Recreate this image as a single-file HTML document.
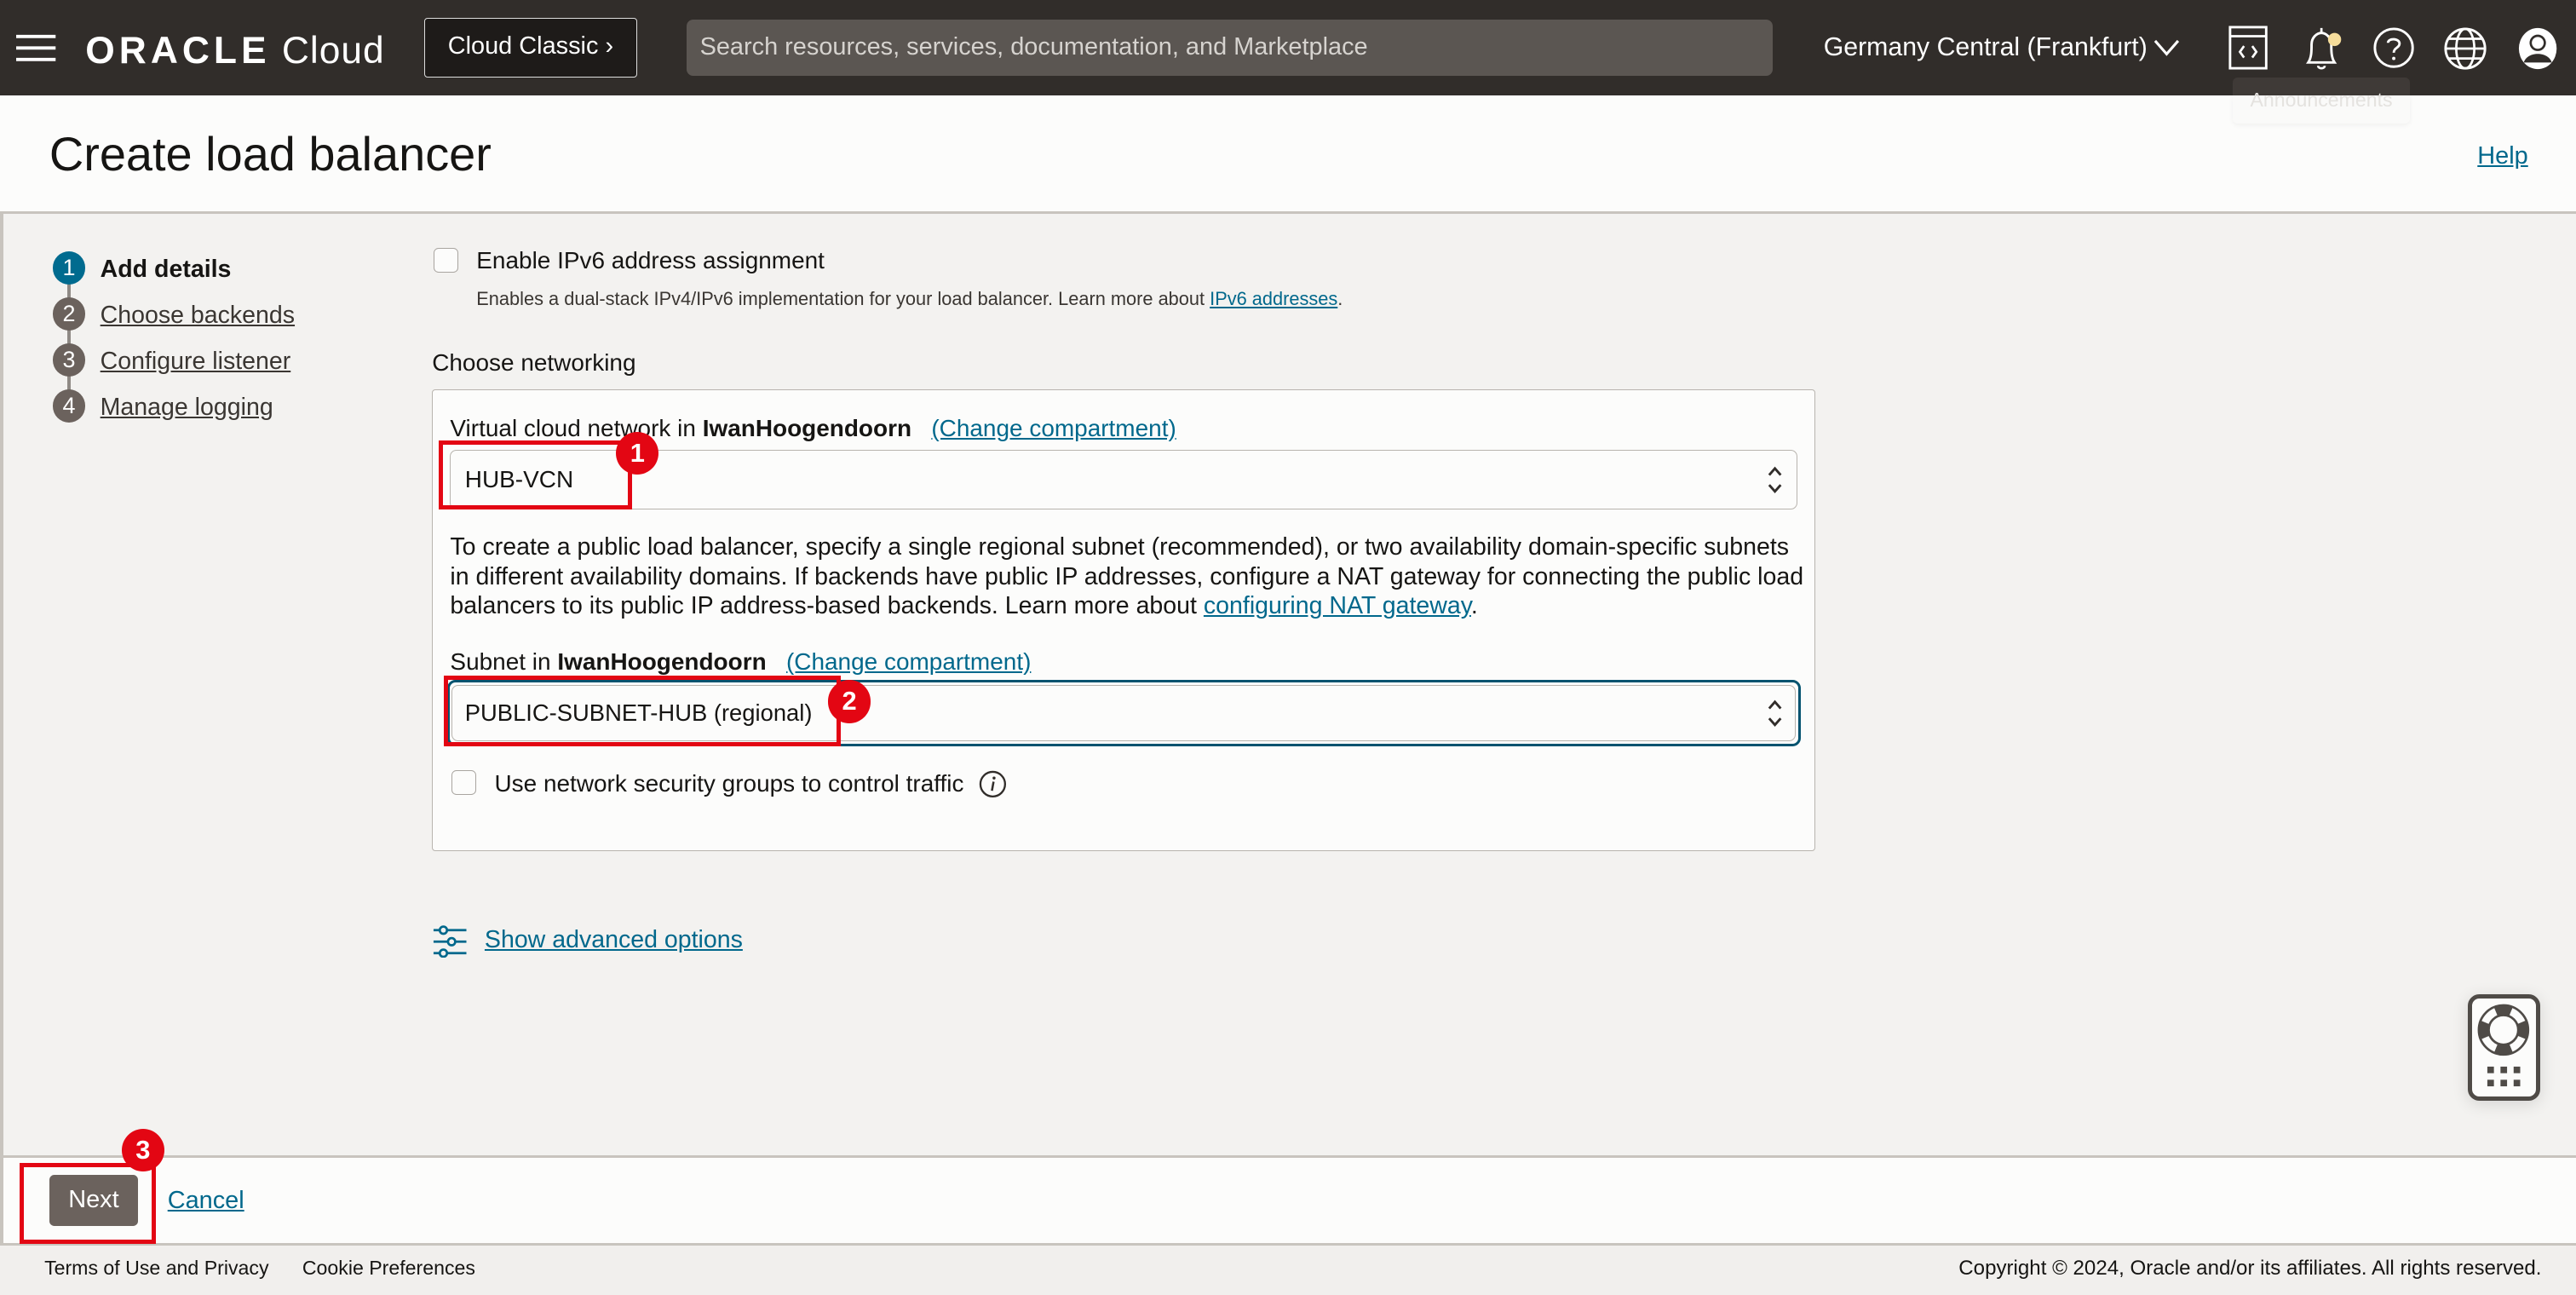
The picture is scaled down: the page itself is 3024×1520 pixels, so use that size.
<!DOCTYPE html>
<html><head><meta charset="utf-8"><style>
html,body{margin:0;padding:0;}
body{width:1568px;height:788px;zoom:1.928571;overflow:hidden;background:#f3f2f0;font-family:"Liberation Sans",Arial,sans-serif;color:#161513;position:relative;}
.a{position:absolute;white-space:nowrap;}
.lnk{color:#00688c;text-decoration:underline;}
.hdr{left:0;top:0;width:1568px;height:58px;background:#312d2a;}
.red{position:absolute;border:3px solid #e30613;box-sizing:border-box;}
.badge{position:absolute;width:26px;height:26px;border-radius:50%;background:#e30613;color:#fff;font-weight:bold;font-size:16px;line-height:26px;text-align:center;}
.step{position:absolute;left:32px;width:20px;height:20px;border-radius:50%;background:#6b625d;color:#fff;font-size:14px;line-height:20px;text-align:center;}
.sel{position:absolute;background:#fcfcfb;border:1px solid #b8b4ae;border-radius:4px;box-sizing:border-box;}
.cb{position:absolute;width:15px;height:15px;border:1px solid #a9a5a0;border-radius:3px;background:#fcfcfb;box-sizing:border-box;}
</style></head><body>
<div class="a hdr"></div>
<svg class="a" style="left:10px;top:20px" width="25" height="18"><path d="M0 2H24M0 9H24M0 16H24" stroke="#fff" stroke-width="2"/></svg>
<div class="a" style="left:52px;top:18px;font-size:23px;color:#fff;line-height:26px;letter-spacing:0.5px"><b style="font-weight:bold;letter-spacing:2.6px">ORACLE</b> <span style="font-weight:normal">Cloud</span></div>
<div class="a" style="left:258px;top:11px;width:130px;height:36px;border:1px solid #ddd;border-radius:2px;background:#1e1b19;box-sizing:border-box;color:#fff;font-size:15px;line-height:34px;text-align:center">Cloud Classic ›</div>
<div class="a" style="left:418px;top:12px;width:661px;height:34px;background:#5b5652;border-radius:4px;color:#d6d3cf;font-size:15px;line-height:34px;padding-left:8px;box-sizing:border-box">Search resources, services, documentation, and Marketplace</div>
<div class="a" style="left:1110px;top:19px;color:#fff;font-size:15.7px;line-height:20px">Germany Central (Frankfurt)</div>
<svg class="a" style="left:1311px;top:24px" width="16" height="11"><path d="M1 1L8 9L15 1" stroke="#fff" stroke-width="1.6" fill="none"/></svg>
<svg class="a" style="left:1356px;top:15px" width="26" height="28"><rect x="1.5" y="1.5" width="22" height="25" fill="none" stroke="#fff" stroke-width="1.5"/><path d="M1.5 7H23.5M10 13L7.5 16.5L10 20M15 13L17.5 16.5L15 20" stroke="#fff" stroke-width="1.4" fill="none"/></svg>
<svg class="a" style="left:1401px;top:15px" width="26" height="30"><path d="M4 23C6 20 6 16 6 12C6 8 9 5 12 5C15 5 18 8 18 12C18 16 18 20 20 23Z" fill="none" stroke="#fff" stroke-width="1.5"/><path d="M10 25C10 27 14 27 14 25M12 2V5" stroke="#fff" stroke-width="1.4" fill="none"/><circle cx="20" cy="9" r="4" fill="#f6dd9b"/></svg>
<svg class="a" style="left:1444px;top:16px" width="26" height="26"><circle cx="13" cy="13" r="11.5" fill="none" stroke="#fff" stroke-width="1.5"/><path d="M9.5 10C9.5 7 16.5 7 16.5 10.5C16.5 13 13 13 13 16" stroke="#fff" stroke-width="1.5" fill="none"/><circle cx="13" cy="19.5" r="1" fill="#fff"/></svg>
<svg class="a" style="left:1487px;top:16px" width="27" height="27"><circle cx="13.5" cy="13.5" r="12" fill="none" stroke="#fff" stroke-width="1.5"/><ellipse cx="13.5" cy="13.5" rx="5.5" ry="12" fill="none" stroke="#fff" stroke-width="1.4"/><path d="M1.5 13.5H25.5M3.5 7.5H23.5M3.5 19.5H23.5" stroke="#fff" stroke-width="1.4"/></svg>
<svg class="a" style="left:1532px;top:16px" width="25" height="27"><ellipse cx="12.5" cy="13.5" rx="11.5" ry="12.5" fill="#fff"/><circle cx="12.5" cy="10" r="5" fill="#312d2a"/><path d="M4 22C6 15 19 15 21 22" fill="#312d2a"/><circle cx="12.5" cy="10" r="3.6" fill="#fff"/></svg>

<div class="a" style="left:0;top:58px;width:1568px;height:72px;background:#fcfcfb;border-bottom:2px solid #c8c4be;box-sizing:border-box"></div>
<div class="a" style="left:1359px;top:47px;width:108px;height:11px;background:#3f3a37;border-radius:3px 3px 0 0"></div>
<div class="a" style="left:1359px;top:58px;width:108px;height:17px;background:#fafaf9;border-radius:0 0 3px 3px;box-shadow:0 1px 3px rgba(0,0,0,0.05)"></div>
<div class="a" style="left:1359px;top:52px;width:108px;color:#e4e2df;font-size:12px;line-height:18px;text-align:center">Announcements</div>
<div class="a" style="left:30px;top:77px;font-size:29px;line-height:34px">Create load balancer</div>
<div class="a lnk" style="left:1508px;top:86px;font-size:15px;line-height:18px">Help</div>
<div class="a" style="left:0;top:130px;width:2px;height:658px;background:#c8c4be"></div>

<div class="a" style="left:41px;top:170px;width:2px;height:72px;background:#8f8a85"></div>
<div class="step" style="top:153px;background:#006b8f">1</div>
<div class="step" style="top:181px">2</div>
<div class="step" style="top:209px">3</div>
<div class="step" style="top:237px">4</div>
<div class="a" style="left:61px;top:155px;font-size:14.8px;font-weight:bold;line-height:18px">Add details</div>
<div class="a" style="left:61px;top:183px;font-size:14.8px;line-height:18px;color:#3a3632;text-decoration:underline">Choose backends</div>
<div class="a" style="left:61px;top:211px;font-size:14.8px;line-height:18px;color:#3a3632;text-decoration:underline">Configure listener</div>
<div class="a" style="left:61px;top:239px;font-size:14.8px;line-height:18px;color:#3a3632;text-decoration:underline">Manage logging</div>

<div class="cb" style="left:264px;top:151px"></div>
<div class="a" style="left:290px;top:150px;font-size:14.5px;line-height:18px">Enable IPv6 address assignment</div>
<div class="a" style="left:290px;top:175px;font-size:11.3px;line-height:14px;color:#3a3632">Enables a dual-stack IPv4/IPv6 implementation for your load balancer. Learn more about <span class="lnk">IPv6 addresses</span>.</div>
<div class="a" style="left:263px;top:212px;font-size:14.5px;line-height:18px">Choose networking</div>

<div class="a" style="left:263px;top:237px;width:842px;height:281px;background:#fcfcfb;border:1px solid #b8b4ae;border-radius:2px;box-sizing:border-box"></div>
<div class="a" style="left:274px;top:252px;font-size:14.5px;line-height:18px">Virtual cloud network in <b>IwanHoogendoorn</b> &nbsp; <span class="lnk">(Change compartment)</span></div>
<div class="sel" style="left:274px;top:274px;width:820px;height:36px"></div>
<div class="a" style="left:283px;top:283px;font-size:14.5px;line-height:18px">HUB-VCN</div>
<svg class="a" style="left:1075px;top:283px" width="11" height="18"><path d="M2 6L5.5 2L9 6M2 12L5.5 16L9 12" stroke="#312d2a" stroke-width="1.5" fill="none"/></svg>
<div class="a" style="left:274px;top:324px;font-size:14.8px;line-height:18px">To create a public load balancer, specify a single regional subnet (recommended), or two availability domain-specific subnets<br>in different availability domains. If backends have public IP addresses, configure a NAT gateway for connecting the public load<br>balancers to its public IP address-based backends. Learn more about <span class="lnk">configuring NAT gateway</span>.</div>
<div class="a" style="left:274px;top:394px;font-size:14.5px;line-height:18px">Subnet in <b>IwanHoogendoorn</b> &nbsp; <span class="lnk">(Change compartment)</span></div>
<div class="sel" style="left:272px;top:414px;width:824px;height:40px;border:2px solid #04536f;border-radius:5px"></div>
<div class="sel" style="left:275px;top:417px;width:818px;height:34px"></div>
<div class="a" style="left:283px;top:425px;font-size:14.2px;line-height:18px">PUBLIC-SUBNET-HUB (regional)</div>
<svg class="a" style="left:1075px;top:425px" width="11" height="18"><path d="M2 6L5.5 2L9 6M2 12L5.5 16L9 12" stroke="#312d2a" stroke-width="1.5" fill="none"/></svg>
<div class="cb" style="left:275px;top:469px"></div>
<div class="a" style="left:301px;top:468px;font-size:14.5px;line-height:18px">Use network security groups to control traffic</div>
<svg class="a" style="left:596px;top:469px" width="17" height="17"><circle cx="8.5" cy="8.5" r="7.5" fill="none" stroke="#312d2a" stroke-width="1.2"/><path d="M9 7L8 12.5" stroke="#312d2a" stroke-width="1.3"/><circle cx="9.3" cy="4.8" r="0.9" fill="#312d2a"/></svg>

<svg class="a" style="left:263px;top:563px" width="22" height="20"><g stroke="#00688c" stroke-width="1.4" fill="none"><path d="M1 3H5M9 3H21M1 10H10M14 10H21M1 17H5M9 17H21"/><circle cx="7" cy="3" r="2.2"/><circle cx="12" cy="10" r="2.2"/><circle cx="7" cy="17" r="2.2"/></g></svg>
<div class="a lnk" style="left:295px;top:563px;font-size:14.8px;line-height:18px">Show advanced options</div>

<div class="a" style="left:1502px;top:605px;width:44px;height:65px;border:3px solid #4f4b47;border-radius:7px;background:#fcfcfb;box-sizing:border-box;box-shadow:0 2px 10px rgba(0,0,0,0.12)"></div>
<svg class="a" style="left:1508px;top:611px" width="32" height="32"><circle cx="16" cy="16" r="12" fill="none" stroke="#4f4b47" stroke-width="6" stroke-dasharray="9.4 9.4" stroke-dashoffset="4.7"/><circle cx="16" cy="16" r="15" fill="none" stroke="#4f4b47" stroke-width="1.4"/><circle cx="16" cy="16" r="9" fill="none" stroke="#4f4b47" stroke-width="1.4"/></svg>
<svg class="a" style="left:1513px;top:648px" width="22" height="14"><g fill="#4f4b47"><rect x="1" y="1" width="4" height="4"/><rect x="9" y="1" width="4" height="4"/><rect x="17" y="1" width="4" height="4"/><rect x="1" y="9" width="4" height="4"/><rect x="9" y="9" width="4" height="4"/><rect x="17" y="9" width="4" height="4"/></g></svg>

<div class="a" style="left:0;top:703px;width:1568px;height:55px;background:#fcfcfb;border-top:2px solid #c8c4be;border-bottom:2px solid #c8c4be;box-sizing:border-box"></div>
<div class="a" style="left:0;top:703px;width:2px;height:55px;background:#c8c4be"></div>
<div class="a" style="left:30px;top:715px;width:54px;height:31px;background:#6b625d;border-radius:3px;color:#fff;font-size:15px;line-height:31px;text-align:center">Next</div>
<div class="a lnk" style="left:102px;top:722px;font-size:15px;line-height:18px">Cancel</div>
<div class="a" style="left:0;top:758px;width:1568px;height:30px;background:#f1efed"></div>
<div class="a" style="left:27px;top:765px;font-size:12px;line-height:14px;color:#161513">Terms of Use and Privacy</div>
<div class="a" style="left:184px;top:765px;font-size:12px;line-height:14px;color:#161513">Cookie Preferences</div>
<div class="a" style="right:21px;top:765px;font-size:12.5px;line-height:14px;color:#161513">Copyright © 2024, Oracle and/or its affiliates. All rights reserved.</div>

<div class="red" style="left:267px;top:268px;width:118px;height:42px"></div>
<div class="badge" style="left:375px;top:263px">1</div>
<div class="red" style="left:270px;top:411px;width:242px;height:43px"></div>
<div class="badge" style="left:504px;top:414px">2</div>
<div class="red" style="left:12px;top:708px;width:83px;height:49px"></div>
<div class="badge" style="left:74px;top:687px">3</div>
</body></html>
